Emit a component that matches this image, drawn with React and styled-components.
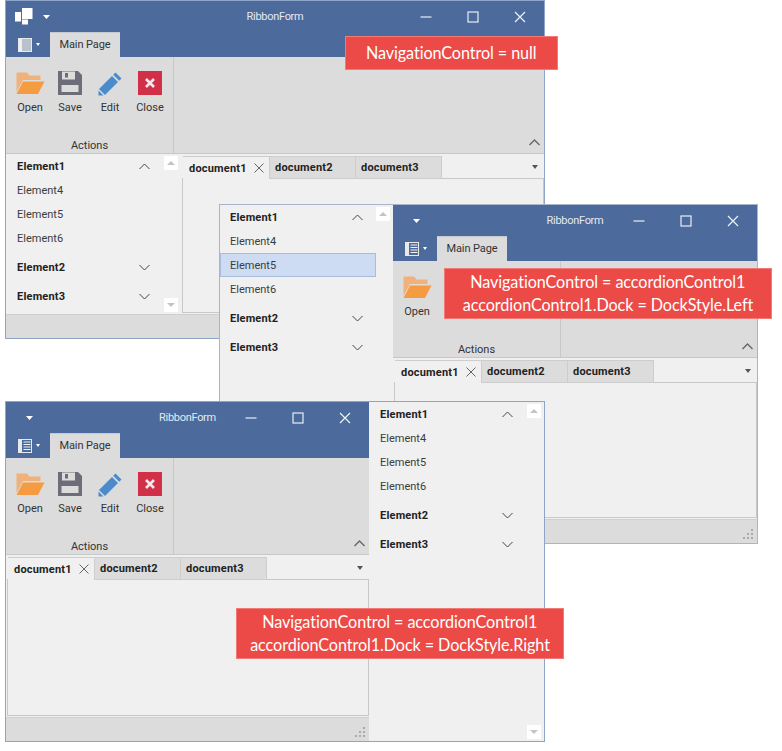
import React from 'react';
import styled, { createGlobalStyle } from 'styled-components';

const Global = createGlobalStyle`
  html, body { margin: 0; padding: 0; background: #fff; }
  body { font-family: Roboto, "Open Sans", "Liberation Sans", sans-serif; overflow: hidden; }
`;

const Desktop = styled.div`
  position: relative;
  width: 782px;
  height: 751px;
  overflow: hidden;
`;

const FormWindow = styled.div`
  position: absolute;
  left: ${p => p.$left}px;
  top: ${p => p.$top}px;
  width: ${p => p.$w}px;
  height: ${p => p.$h}px;
  box-sizing: border-box;
  display: flex;
  background: #f0f0f0;
  border: 1px solid ${p => p.$edge};
`;

const Main = styled.div`
  flex: 1;
  min-width: 0;
  display: flex;
  flex-direction: column;
`;

const Band = styled.div`
  background: #4c6b9c;
  flex: none;
  height: 56px;
  display: flex;
  flex-direction: column;
`;

const TitleRow = styled.div`
  height: 31px;
  flex: none;
  display: grid;
  grid-template-columns: 1fr auto 1fr;
  align-items: center;
`;

const QuickAccess = styled.div`
  display: flex;
  align-items: center;
  padding-left: ${p => (p.$logo ? 9 : 20)}px;
  gap: 10px;
`;

const TitleText = styled.div`
  color: #e4e9f1;
  font-size: 11px;
  line-height: 13px;
  letter-spacing: -0.3px;
`;

const Controls = styled.div`
  display: flex;
  justify-content: flex-end;
  padding-right: 1px;
`;

const ControlButton = styled.div`
  width: 47px;
  height: 31px;
  display: flex;
  align-items: center;
  justify-content: center;
`;

const TabRow = styled.div`
  height: 25px;
  flex: none;
  display: flex;
  align-items: stretch;
`;

const AppMenu = styled.div`
  width: 44px;
  display: flex;
  align-items: center;
  padding-left: 12px;
  box-sizing: border-box;
  gap: 3px;
`;

const PageTab = styled.div`
  width: 70px;
  background: #dcdcdc;
  color: #333;
  font-size: 11px;
  text-align: center;
  line-height: 24px;
  border-top: 1px solid #c5cad2;
  box-sizing: border-box;
  letter-spacing: -0.1px;
`;

const Ribbon = styled.div`
  height: 97px;
  flex: none;
  box-sizing: border-box;
  display: flex;
  background: #dcdcdc;
  border-bottom: 1px solid #c8c8c8;
`;

const RibbonGroup = styled.div`
  width: 168px;
  flex: none;
  box-sizing: border-box;
  border-right: 1px solid #c8c8c8;
  display: flex;
  flex-direction: column;
  padding: 14px 0 0 4px;
`;

const ActionRow = styled.div`
  display: flex;
  flex: 1;
`;

const Action = styled.div`
  width: 40px;
  display: flex;
  flex-direction: column;
  align-items: center;
  color: #333;
  font-size: 11px;
  line-height: 14px;
`;

const ActionIcon = styled.div`
  height: 24px;
  width: 30px;
  margin-bottom: 6px;
  display: flex;
  align-items: center;
  justify-content: center;
`;

const GroupCaption = styled.div`
  font-size: 11px;
  line-height: 14px;
  color: #333;
  text-align: center;
  padding: 0 4px 0 0;
`;

const Collapse = styled.div`
  margin: auto 4px 7px auto;
  width: 11px;
  height: 7px;
  display: flex;
`;

const Content = styled.div`
  flex: 1;
  min-height: 0;
  display: flex;
`;

const DocArea = styled.div`
  flex: 1;
  min-width: 0;
  display: flex;
  flex-direction: column;
  padding: 2px 0 1px 1px;
`;

const DocTabs = styled.div`
  height: 23px;
  flex: none;
  display: flex;
  position: relative;
  padding-left: 1px;
  z-index: 1;
  margin-bottom: -1px;
`;

const DocTab = styled.div`
  width: ${p => (p.$active ? 87 : 86)}px;
  box-sizing: border-box;
  display: flex;
  align-items: center;
  justify-content: space-between;
  padding: 0 5px 0 ${p => (p.$active ? 6 : 5)}px;
  font-size: 11px;
  font-weight: 700;
  letter-spacing: 0.2px;
  color: #222;
  background: ${p => (p.$active ? '#f0f0f0' : '#dcdcdc')};
  border: 1px solid #cdcdcd;
  border-width: 1px 1px ${p => (p.$active ? 0 : 1)}px 0;
`;

const TabsArrow = styled.div`
  margin: 9px 6px 0 auto;
  width: 0;
  height: 0;
  border-left: 3.5px solid transparent;
  border-right: 3.5px solid transparent;
  border-top: 4px solid #555;
`;

const DocBody = styled.div`
  flex: 1;
  background: #f0f0f0;
  border: 1px solid #c8c8c8;
`;

const Status = styled.div`
  height: 24px;
  flex: none;
  background: #dcdcdc;
  border-top: 1px solid #cfcfcf;
  display: flex;
  justify-content: flex-end;
  align-items: flex-end;
  padding: 0 3px 3px 0;
  box-sizing: border-box;
`;

const Accordion = styled.div`
  position: relative;
  width: ${p => p.$w}px;
  flex: none;
  background: #f0f0f0;
  display: flex;
  flex-direction: column;
  color: #333;
`;

const GroupHeader = styled.div`
  height: 24px;
  flex: none;
  display: flex;
  align-items: center;
  justify-content: space-between;
  padding: 0 ${p => p.$right}px 0 ${p => p.$indent}px;
  margin-top: ${p => (p.$first ? 0 : 5)}px;
  font-size: 11px;
  font-weight: 700;
  letter-spacing: 0.2px;
  color: #222;
`;

const Item = styled.div`
  height: 24px;
  box-sizing: border-box;
  display: flex;
  align-items: center;
  padding-left: ${p => (p.$selected ? p.$indent - 1 : p.$indent)}px;
  margin-right: 17px;
  font-size: 11px;
  color: #3c3c3c;
  background: ${p => (p.$selected ? '#cddcf3' : 'transparent')};
  border: ${p => (p.$selected ? '1px solid #a9bddb' : 'none')};
`;

const ScrollButton = styled.div`
  position: absolute;
  right: 3px;
  ${p => (p.$down ? 'bottom: 2px;' : 'top: 2px;')}
  width: 14px;
  height: 14px;
  background: #fff;
  display: flex;
  align-items: center;
  justify-content: center;
`;

const ScrollArrow = styled.div`
  width: 0;
  height: 0;
  border-left: 4px solid transparent;
  border-right: 4px solid transparent;
  ${p => (p.$down ? 'border-top' : 'border-bottom')}: 4px solid #c4c4c4;
`;

const Callout = styled.div`
  position: absolute;
  z-index: 10;
  left: ${p => p.$left}px;
  top: ${p => p.$top}px;
  width: ${p => p.$w}px;
  height: ${p => p.$h}px;
  box-sizing: border-box;
  display: flex;
  flex-direction: column;
  justify-content: center;
  align-items: center;
  padding-bottom: 1px;
  background: #ec4a46;
  border: 1px solid #f17a76;
  color: #fff;
  font-family: Lato, "Open Sans", sans-serif;
  font-size: 17.5px;
  line-height: 23px;
  letter-spacing: -0.1px;
  white-space: nowrap;
`;

const CalloutLine = styled.span`
  display: inline-block;
  transform: scaleX(0.925);
`;

const Arrow = () => (
  <svg width="7" height="4" viewBox="0 0 7 4"><path d="M0 0h7L3.5 4z" fill="#fff" /></svg>
);

const Logo = () => (
  <svg width="18" height="17" viewBox="0 0 18 17" fill="#fff">
    <rect x="0" y="4" width="6" height="9.500" />
    <rect x="7" y="0" width="10.500" height="11" />
    <rect x="7" y="11.500" width="6" height="5" />
  </svg>
);

const MenuIcon = ({ plain }) => (
  <svg width="15" height="14" viewBox="0 0 15 14">
    <rect x="0.500" y="0.500" width="13" height="13" fill={plain ? '#b9c1cd' : '#4c6b9c'} stroke="#e9e9e9" />
    {plain ? (
      <rect x="1" y="1" width="3" height="12" fill="#eeeeee" />
    ) : (
      <>
        <rect x="1" y="1" width="3" height="12" fill="#e9e9e9" />
        <path d="M5.500 3h7M5.500 5.500h7M5.500 8h7M5.500 10.500h7" stroke="#f2f2f2" />
      </>
    )}
  </svg>
);

const TinyDot = () => (
  <svg width="4" height="3" viewBox="0 0 4 3"><path d="M0 0h4L2 3z" fill="#fff" /></svg>
);

const Minimize = () => (
  <svg width="12" height="12" viewBox="0 0 12 12"><path d="M0.500 6h11" stroke="#e8edf4" strokeWidth="1.200" /></svg>
);
const Maximize = () => (
  <svg width="12" height="12" viewBox="0 0 12 12"><rect x="1" y="1" width="10" height="10" fill="none" stroke="#e8edf4" strokeWidth="1.200" /></svg>
);
const CloseX = () => (
  <svg width="12" height="12" viewBox="0 0 12 12"><path d="M1 1l10 10M11 1L1 11" stroke="#eef2f7" strokeWidth="1.200" /></svg>
);

const FolderIcon = () => (
  <svg width="29" height="23" viewBox="0 0 29 23">
    <path d="M0.500 0.500h10.500l2.500 3h11v4.500H7L0.500 20z" fill="#f0b27a" />
    <path d="M7 9.500h21.500L22 22H0.500z" fill="#f59c43" />
  </svg>
);
const SaveIcon = () => (
  <svg width="24" height="24" viewBox="0 0 24 24">
    <path d="M0 0h20l4 4v20H0z" fill="#6c6d78" />
    <rect x="4" y="0.500" width="13" height="8" fill="#dcdcdc" />
    <rect x="7" y="2" width="3" height="4.500" fill="#6c6d78" />
    <rect x="3.500" y="14" width="17" height="7" fill="#dcdcdc" />
  </svg>
);
const EditIcon = () => (
  <svg width="25" height="25" viewBox="0 0 25 25">
    <path d="M17.500 1.500l6 6-2.300 2.300-6-6z" fill="#4a8bcb" />
    <path d="M14 5l6 6L7 24l-6-6z" fill="#4a8bcb" />
    <path d="M0.500 19.500l5 5H0.500z" fill="#4a8bcb" />
  </svg>
);
const CloseIcon = () => (
  <svg width="24" height="24" viewBox="0 0 24 24">
    <rect width="24" height="24" fill="#d22f48" />
    <path d="M8 8l8 8M16 8l-8 8" stroke="#f6e9eb" strokeWidth="2.600" />
  </svg>
);

const Chevron = ({ up, color = '#555', weight = 1 }) => (
  <svg width="11" height="7" viewBox="0 0 11 7" style={{ flex: 'none' }}>
    <path d={up ? 'M0.500 6L5.500 1l5 5' : 'M0.500 1l5 5 5-5'} fill="none" stroke={color} strokeWidth={weight} />
  </svg>
);

const TabClose = () => (
  <svg width="10" height="10" viewBox="0 0 10 10"><path d="M0.500 0.500l9 9M9.500 0.500l-9 9" stroke="#666" strokeWidth="1" /></svg>
);

const Grip = () => (
  <svg width="11" height="11" viewBox="0 0 11 11" fill="#a9a9a9">
    <rect x="8" y="0" width="2" height="2" />
    <rect x="4" y="4" width="2" height="2" />
    <rect x="8" y="4" width="2" height="2" />
    <rect x="0" y="8" width="2" height="2" />
    <rect x="4" y="8" width="2" height="2" />
    <rect x="8" y="8" width="2" height="2" />
  </svg>
);

const NavPanel = ({ w, selected, right = 30, indent = 11 }) => (
  <Accordion $w={w}>
    <GroupHeader $first $right={right} $indent={indent}>Element1<Chevron up color="#444" /></GroupHeader>
    {['Element4', 'Element5', 'Element6'].map(t => (
      <Item key={t} $selected={t === selected} $indent={indent}>{t}</Item>
    ))}
    <GroupHeader $right={right} $indent={indent}>Element2<Chevron color="#444" /></GroupHeader>
    <GroupHeader $right={right} $indent={indent}>Element3<Chevron color="#444" /></GroupHeader>
    <ScrollButton><ScrollArrow /></ScrollButton>
    <ScrollButton $down><ScrollArrow $down /></ScrollButton>
  </Accordion>
);

const actions = [
  ['Open', <FolderIcon />],
  ['Save', <SaveIcon />],
  ['Edit', <EditIcon />],
  ['Close', <CloseIcon />],
];

const RibbonForm = ({ left, top, w, h, edge, nav, navW, navRight, navIndent, selected, logo, actionCount = 4 }) => (
  <FormWindow $left={left} $top={top} $w={w} $h={h} $edge={edge}>
    {nav === 'left' && <NavPanel w={navW} selected={selected} right={navRight} indent={navIndent} />}
    <Main>
      <Band>
        <TitleRow>
          <QuickAccess $logo={logo}>
            {logo && <Logo />}
            <Arrow />
          </QuickAccess>
          <TitleText>RibbonForm</TitleText>
          <Controls>
            <ControlButton><Minimize /></ControlButton>
            <ControlButton><Maximize /></ControlButton>
            <ControlButton><CloseX /></ControlButton>
          </Controls>
        </TitleRow>
        <TabRow>
          <AppMenu><MenuIcon plain={logo} /><TinyDot /></AppMenu>
          <PageTab>Main Page</PageTab>
        </TabRow>
      </Band>
      <Ribbon>
        <RibbonGroup>
          <ActionRow>
            {actions.slice(0, actionCount).map(([label, icon]) => (
              <Action key={label}>
                <ActionIcon>{icon}</ActionIcon>
                {label}
              </Action>
            ))}
          </ActionRow>
          <GroupCaption>Actions</GroupCaption>
        </RibbonGroup>
        <Collapse><Chevron up color="#666" weight={1.4} /></Collapse>
      </Ribbon>
      <Content>
        {nav === 'inner' && <NavPanel w={navW} right={navRight} indent={navIndent} />}
        <DocArea>
          <DocTabs>
            <DocTab $active>document1<TabClose /></DocTab>
            <DocTab>document2</DocTab>
            <DocTab>document3</DocTab>
            <TabsArrow />
          </DocTabs>
          <DocBody />
        </DocArea>
      </Content>
      <Status><Grip /></Status>
    </Main>
    {nav === 'right' && <NavPanel w={navW} right={navRight} indent={navIndent} />}
  </FormWindow>
);

export default function App() {
  return (
    <Desktop>
      <Global />
      <RibbonForm left={5} top={0} w={540} h={339} edge="#8ea5c9" nav="inner" navW={175} navRight={31} logo />
      <RibbonForm left={219} top={204} w={539} h={340} edge="#a9b6ca" nav="left" navW={173} navRight={30} navIndent={10} selected="Element5" actionCount={1} />
      <RibbonForm left={5} top={401} w={540} h={341} edge="#8ea5c9" nav="right" navW={175} navRight={31} />
      <Callout $left={345} $top={36} $w={213} $h={34}>
        <CalloutLine>NavigationControl = null</CalloutLine>
      </Callout>
      <Callout $left={444} $top={268} $w={328} $h={51}>
        <CalloutLine>NavigationControl = accordionControl1</CalloutLine>
        <CalloutLine>accordionControl1.Dock = DockStyle.Left</CalloutLine>
      </Callout>
      <Callout $left={236} $top={608} $w={328} $h={51}>
        <CalloutLine>NavigationControl = accordionControl1</CalloutLine>
        <CalloutLine>accordionControl1.Dock = DockStyle.Right</CalloutLine>
      </Callout>
    </Desktop>
  );
}
